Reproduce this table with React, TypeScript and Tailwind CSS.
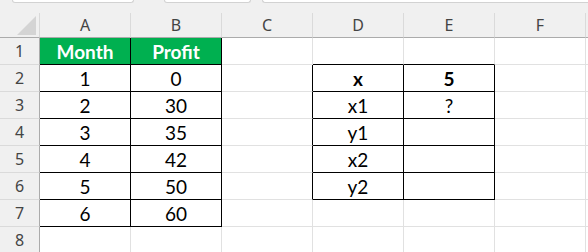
const COLS = ['A', 'B', 'C', 'D', 'E', 'F'];
const ROWS = [1, 2, 3, 4, 5, 6, 7, 8];

// cell values keyed by "A1" style refs
const values: Record<string, string> = {
  A1: 'Month', B1: 'Profit',
  A2: '1', B2: '0',
  A3: '2', B3: '30',
  A4: '3', B4: '35',
  A5: '4', B5: '42',
  A6: '5', B6: '50',
  A7: '6', B7: '60',
  D2: 'x', E2: '5',
  D3: 'x1', E3: '?',
  D4: 'y1',
  D5: 'x2',
  D6: 'y2',
};

const inRange = (c: number, r: number, c1: number, r1: number, c2: number, r2: number) =>
  c >= c1 && c <= c2 && r >= r1 && r <= r2;

// bordered blocks: A1:B7 and D2:E6
const inTable = (c: number, r: number) => inRange(c, r, 0, 1, 1, 7) || inRange(c, r, 3, 2, 4, 6);

const Cell = ({ c, r }: { c: number; r: number }) => {
  const ref = `${COLS[c]}${r}`;
  const val = values[ref];
  const rightBlack = inTable(c, r) || inTable(c + 1, r);
  const bottomBlack = inTable(c, r) || inTable(c, r + 1);
  const header = r === 1 && c <= 1;
  const bold = header || ref === 'D2' || ref === 'E2';

  return (
    <div
      className={`flex items-center justify-center border-r border-b text-[19px] leading-none ${
        rightBlack ? 'border-r-black' : 'border-r-[#e1e1e1]'
      } ${bottomBlack ? 'border-b-black' : 'border-b-[#e1e1e1]'} ${
        header ? 'bg-[#00b050] text-white' : 'bg-white text-black'
      } ${bold ? 'font-bold' : 'font-normal'}`}
    >
      {val}
    </div>
  );
};

export default function App() {
  return (
    <div className="w-[588px] h-[252px] overflow-hidden bg-[#f0f0f0] font-['Lato',sans-serif]">
      {/* bottom edges of the name box and formula bar */}
      <div className="h-[13px] flex">
        <div className="ml-[12px] w-[122px] h-[3px] bg-white border border-t-0 border-[#d2d2d2] rounded-b-[3px]" />
        <div className="ml-[30px] w-[87px] h-[3px] bg-white border border-t-0 border-[#d2d2d2] rounded-b-[3px]" />
        <div className="ml-[11px] flex-1 h-[3px] bg-white border border-t-0 border-r-0 border-[#d2d2d2] rounded-bl-[3px]" />
      </div>

      <div className="grid grid-cols-[40px_repeat(6,91px)_1fr] grid-rows-[25px_repeat(8,27px)]">
        {/* select-all corner */}
        <div className="relative border-r border-b border-r-[#d9d9d9] border-b-[#ababab]">
          <svg className="absolute left-[17px] top-[3px]" width="19" height="19" viewBox="0 0 19 19">
            <polygon points="19,0 19,19 0,19" fill="#d4d4d4" />
          </svg>
        </div>
        {COLS.map((col) => (
          <div
            key={col}
            className="flex items-center justify-center border-r border-b border-r-[#dadada] border-b-[#ababab] text-[16px] text-[#444] font-['Noto_Sans',sans-serif]"
          >
            {col}
          </div>
        ))}
        <div className="border-b border-b-[#ababab]" />

        {ROWS.map((r) => (
          <div key={r} className="contents">
            <div className="flex items-center justify-center border-r border-b border-r-[#ababab] border-b-[#dadada] text-[16px] text-[#444] font-['Noto_Sans',sans-serif]">
              {r}
            </div>
            {COLS.map((_, c) => (
              <Cell key={c} c={c} r={r} />
            ))}
            {/* sliver of column G */}
            <div className="bg-white border-b border-b-[#e1e1e1]" />
          </div>
        ))}
      </div>
    </div>
  );
}
